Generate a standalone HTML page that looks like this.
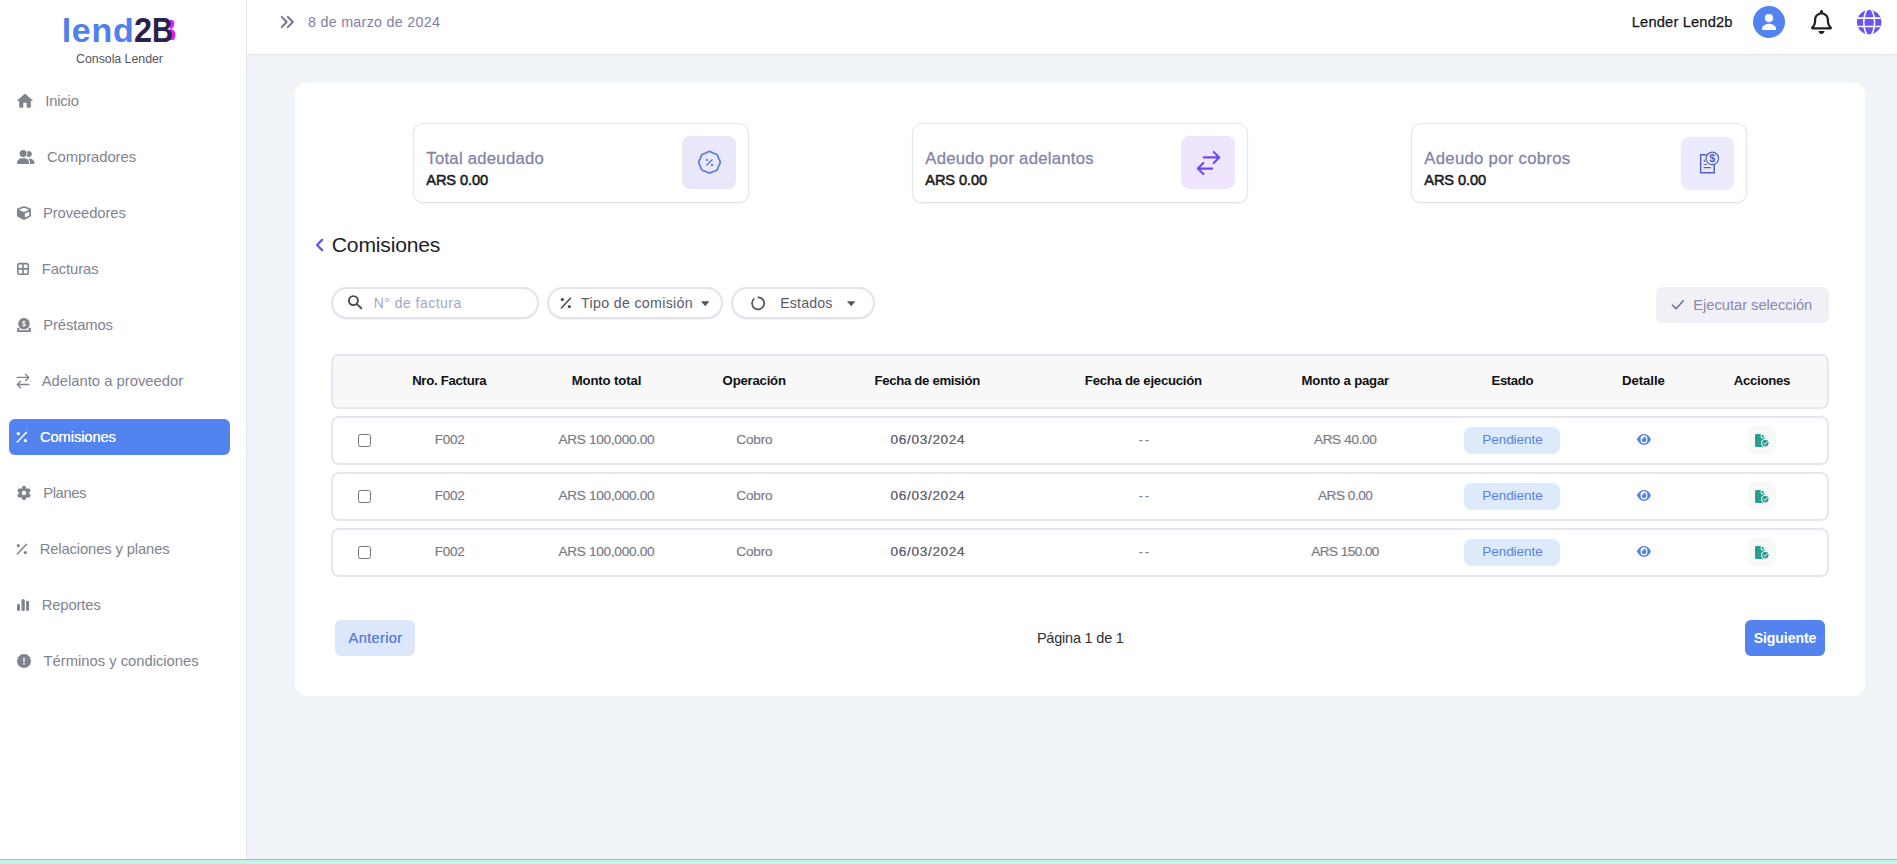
<!DOCTYPE html>
<html lang="es">
<head>
<meta charset="utf-8">
<title>lend2B - Consola Lender - Comisiones</title>
<style>
*{box-sizing:border-box;margin:0;padding:0}
html,body{width:1897px;height:864px;overflow:hidden}
body{position:relative;background:#f0f3f8;font-family:"Liberation Sans",sans-serif;color:#222;-webkit-font-smoothing:antialiased}
.t{position:absolute;white-space:nowrap;line-height:20px;display:block;font-weight:400;text-decoration:none}
.i{position:absolute;display:block;overflow:visible}
.abs{position:absolute;display:block}
#sidebar{position:absolute;left:0;top:0;width:247px;height:859px;background:#fff;border-right:1px solid #e6e7ee}
#topbar{position:absolute;left:247px;top:0;width:1650px;height:55px;background:#fff;border-bottom:1px solid #e4e6ed}
#card{position:absolute;left:295px;top:83px;width:1570px;height:613px;background:#fff;border-radius:12px}
#strip{position:absolute;left:0;top:859px;width:1897px;height:5px;background:#c5f2e8;border-top:1px solid #9fbfb8}
.nav-active{position:absolute;left:9px;top:419px;width:221px;height:36px;border-radius:6px;background:#5383ee}
.stat{position:absolute;top:123px;width:336px;height:80px;border:1px solid #e3e5ec;border-radius:10px;background:#fff;box-shadow:0 1px 2px rgba(40,50,90,.08)}
.stat .ib{position:absolute;left:268px;top:12px;width:54px;height:53px;border-radius:8px}
.pill{position:absolute;top:287px;height:32px;border:2px solid #e1e3ea;border-radius:16px;background:#fff;box-shadow:0 1px 1px rgba(40,50,90,.06)}
.btn{position:absolute;height:36px;border-radius:6px}
.th,.tr{position:absolute;left:331px;width:1498px;border:2px solid #e5e7ee;border-radius:8px}
.th{top:354px;height:55px;background:#f8f8f8}
.tr{height:49px;background:#fff}
.badge{position:absolute;left:1464px;width:96px;height:27px;border-radius:7px;background:#ddeafc}
.cb{position:absolute;left:358px;width:13px;height:13px;margin:0;padding:0}
.act{position:absolute;left:1748px;width:28px;height:28px;border-radius:7px;background:#f6f9f8}
</style>
</head>
<body>

<aside id="sidebar">
<span class="t" style="top:19.97px;left:155.2px;font-size:35px;font-weight:700;color:#e21cf2;transform:scaleX(.86);transform-origin:0 0;clip-path:inset(0 0 0 17.5px)">B</span>
<span class="t" style="top:20.32px;left:61.7px;font-size:34px;font-weight:700;letter-spacing:0.7px;color:#5080ee">lend</span>
<span class="t" style="top:19.97px;left:134.2px;font-size:35px;font-weight:700;color:#28224a;transform:scaleX(.93);transform-origin:0 0">2</span>
<span class="t" style="top:19.97px;left:152.3px;font-size:35px;font-weight:700;color:#28224a;transform:scaleX(.83);transform-origin:0 0">B</span>
<span class="t" style="top:48.50px;font-size:12.4px;color:#54545e;letter-spacing:-0.042px;left:-30.52px;width:300px;text-align:center;">Consola Lender</span>
<nav>
<span class="nav-active"></span>
<a class="t" style="top:90.87px;font-size:14.8px;color:#7f838f;letter-spacing:-0.190px;left:45.30px;">Inicio</a>
<a class="t" style="top:146.87px;font-size:14.8px;color:#7f838f;letter-spacing:-0.046px;left:46.90px;">Compradores</a>
<a class="t" style="top:202.87px;font-size:14.8px;color:#7f838f;letter-spacing:-0.112px;left:43.00px;">Proveedores</a>
<a class="t" style="top:258.87px;font-size:14.8px;color:#7f838f;letter-spacing:-0.096px;left:41.70px;">Facturas</a>
<a class="t" style="top:314.87px;font-size:14.8px;color:#7f838f;letter-spacing:-0.129px;left:43.30px;">Préstamos</a>
<a class="t" style="top:370.87px;font-size:14.8px;color:#7f838f;left:41.70px;">Adelanto a proveedor</a>
<a class="t" style="top:426.87px;font-size:14.8px;color:#ffffff;letter-spacing:-0.135px;left:39.90px;text-shadow:0 0 .4px #fff;">Comisiones</a>
<a class="t" style="top:482.87px;font-size:14.8px;color:#7f838f;letter-spacing:-0.431px;left:43.30px;">Planes</a>
<a class="t" style="top:538.87px;font-size:14.8px;color:#7f838f;letter-spacing:-0.136px;left:39.70px;">Relaciones y planes</a>
<a class="t" style="top:594.87px;font-size:14.8px;color:#7f838f;letter-spacing:-0.136px;left:41.70px;">Reportes</a>
<a class="t" style="top:650.87px;font-size:14.8px;color:#7f838f;letter-spacing:-0.022px;left:43.60px;">Términos y condiciones</a>
<svg class="i" style="left:14.60px;top:91.00px" width="20.00" height="20.00" viewBox="0 0 24 24" ><path fill="#7f838c" d="M10 19v-5h4v5c0 .55.45 1 1 1h3c.55 0 1-.45 1-1v-7h1.7c.46 0 .68-.57.33-.87L12.67 3.6c-.38-.34-.96-.34-1.34 0l-8.36 7.53c-.34.3-.13.87.33.87H5v7c0 .55.45 1 1 1h3c.55 0 1-.45 1-1z"/></svg>
<svg class="i" style="left:17.10px;top:150.00px" width="17.50" height="14.00" viewBox="0 0 640 512" ><path fill="#7f838c" d="M96 128a128 128 0 1 1 256 0A128 128 0 1 1 96 128zM0 482.300C0 383.800 79.800 304 178.300 304h91.400C368.200 304 448 383.800 448 482.300c0 16.400-13.300 29.700-29.700 29.700H29.700C13.300 512 0 498.700 0 482.300zM609.300 512H471.400c5.400-9.400 8.600-20.300 8.600-32v-8c0-60.700-27.100-115.200-69.800-151.800c2.400-.1 4.700-.2 7.100-.2h61.400C567.800 320 640 392.200 640 481.300c0 17-13.800 30.700-30.700 30.700zM432 256c-31 0-59-12.600-79.300-32.900C372.400 196.500 384 163.600 384 128c0-26.800-6.600-52.100-18.300-74.300C384.300 40.100 407.200 32 432 32c61.900 0 112 50.100 112 112s-50.100 112-112 112z"/></svg>
<svg class="i" style="left:17.00px;top:205.90px" width="14.00" height="14.00" viewBox="0 0 512 512" ><path fill="#7f838c" d="M239.1 6.3l-208 78c-18.7 7-31.1 25-31.1 45v225.1c0 18.2 10.3 34.8 26.5 42.9l208 104c13.5 6.8 29.4 6.8 42.9 0l208-104c16.3-8.1 26.5-24.8 26.5-42.9V129.3c0-20-12.4-37.900-31.100-44.900l-208-78C262 2.200 250 2.200 239.100 6.300zM256 68.400l192 72v1.100l-192 78-192-78v-1.100l192-72zm32 356V275.500l160-65v133.900l-160 80z"/></svg>
<svg class="i" style="left:16.00px;top:262.00px" width="14.00" height="14.00" viewBox="0 0 14 14" ><g fill="none" stroke="#7f838c" stroke-width="1.6"><rect x="1.8" y="1.6" width="10.5" height="10.6" rx="2"/><path d="M7.05 1.600v10.600M1.800 6.900h10.500"/></g></svg>
<svg class="i" style="left:17.10px;top:318.30px" width="14.00" height="14.00" viewBox="0 0 512 512" ><path fill="#7f838c" d="M326.700 403.700c-22.100 8-45.900 12.300-70.700 12.300s-48.700-4.400-70.700-12.300c-.3-.1-.5-.2-.8-.3c-30-11-56.800-28.700-78.600-51.400C70 314.600 48 263.900 48 208C48 93.100 141.100 0 256 0S464 93.100 464 208c0 55.900-22 106.600-57.900 144c-1 1-2 2.100-3 3.100c-21.400 21.400-47.400 38.100-76.300 48.600zM256 91.900c-11.100 0-20.100 9-20.100 20.100v6c-5.600 1.200-10.900 2.900-15.900 5.100c-15 6.800-27.900 19.400-31.100 37.700c-1.800 10.200-.8 20 3.400 29c4.200 8.800 10.700 15 17.300 19.500c11.600 7.900 26.900 12.500 38.600 16l2.200 .7c13.900 4.200 23.400 7.400 29.300 11.700c2.500 1.800 3.400 3.200 3.700 4c.3 .8 .9 2.600 .2 6.700c-.6 3.500-2.500 6.400-8 8.800c-6.100 2.600-16 3.900-28.800 1.900c-6-1-16.700-4.600-26.200-7.900l0 0 0 0 0 0c-2.200-.7-4.300-1.500-6.400-2.100c-10.500-3.500-21.800 2.200-25.300 12.700s2.200 21.800 12.700 25.300c1.200 .4 2.700 .9 4.400 1.500c7.900 2.700 20.300 6.900 29.800 9.100V304c0 11.100 9 20.100 20.100 20.100s20.100-9 20.100-20.100v-5.500c5.300-1 10.500-2.500 15.400-4.600c15.700-6.700 28.400-19.700 31.600-38.700c1.800-10.400 1-20.300-3-29.400c-3.900-9-10.200-15.600-16.900-20.500c-12.200-8.800-28.300-13.700-40.400-17.400l-.8-.2c-14.200-4.300-23.800-7.300-29.900-11.400c-2.600-1.800-3.400-3-3.600-3.500c-.2-.3-.7-1.600-.1-5c.3-1.900 1.900-5.200 8.200-8.100c6.400-2.900 16.400-4.500 28.600-2.600c4.300 .7 17.900 3.300 21.700 4.300c10.700 2.800 21.600-3.500 24.500-14.200s-3.500-21.600-14.200-24.500c-4.400-1.200-14.400-3.200-21-4.400V112c0-11.100-9-20.100-20.100-20.100zM48 352H64c19.500 25.900 44 47.700 72.200 64H64v32H256 448V416H375.800c28.200-16.300 52.800-38.100 72.200-64h16c26.500 0 48 21.500 48 48v64c0 26.500-21.500 48-48 48H48c-26.500 0-48-21.500-48-48V400c0-26.500 21.500-48 48-48z"/></svg>
<svg class="i" style="left:16.00px;top:373.00px" width="14.00" height="16.00" viewBox="0 0 14 16" ><g fill="none" stroke="#7f838c" stroke-width="1.350" stroke-linecap="round" stroke-linejoin="round"><path d="M1.300 4.400h11.500M9.500 1.200l3.300 3.200l-3.300 3.200"/><path d="M12.800 11.500h-11.500M4.600 8.300l-3.300 3.200l3.300 3.200"/></g></svg>
<svg class="i" style="left:16.30px;top:431.20px" width="12.00" height="12.00" viewBox="0 0 12 12" ><path d="M1.300 10.900L10.500 1.300" stroke="#ffffff" stroke-width="1.500" stroke-linecap="round" fill="none"/><circle cx="2.300" cy="2.600" r="1.600" fill="#ffffff"/><circle cx="9.400" cy="9.600" r="1.600" fill="#ffffff"/></svg>
<svg class="i" style="left:17.00px;top:486.10px" width="14.00" height="14.00" viewBox="0 0 512 512" ><path fill="#7f838c" d="M495.900 166.600c3.200 8.700 .5 18.400-6.400 24.600l-43.300 39.400c1.100 8.300 1.700 16.800 1.700 25.400s-.6 17.100-1.700 25.400l43.300 39.400c6.900 6.200 9.600 15.900 6.400 24.600c-4.400 11.900-9.700 23.300-15.800 34.300l-4.700 8.100c-6.600 11-14 21.400-22.100 31.200c-5.900 7.200-15.700 9.600-24.500 6.800l-55.700-17.700c-13.400 10.300-28.200 18.900-44 25.400l-12.500 57.100c-2 9.100-9 16.300-18.200 17.800c-13.800 2.300-28 3.500-42.500 3.500s-28.700-1.200-42.500-3.500c-9.200-1.500-16.200-8.700-18.200-17.800l-12.500-57.100c-15.800-6.500-30.600-15.100-44-25.400L83.100 425.900c-8.800 2.800-18.600 .3-24.500-6.800c-8.100-9.800-15.500-20.200-22.100-31.200l-4.700-8.100c-6.100-11-11.400-22.400-15.800-34.300c-3.200-8.700-.5-18.400 6.400-24.600l43.300-39.400C64.600 273.100 64 264.600 64 256s.6-17.100 1.700-25.400L22.400 191.200c-6.900-6.200-9.600-15.900-6.400-24.600c4.400-11.900 9.700-23.300 15.800-34.300l4.700-8.100c6.600-11 14-21.400 22.100-31.200c5.900-7.200 15.700-9.600 24.500-6.800l55.700 17.700c13.400-10.300 28.200-18.900 44-25.400l12.500-57.100c2-9.100 9-16.300 18.200-17.800C227.300 1.200 241.500 0 256 0s28.700 1.200 42.500 3.500c9.200 1.500 16.200 8.700 18.200 17.800l12.500 57.100c15.800 6.500 30.600 15.100 44 25.400l55.700-17.700c8.800-2.800 18.600-.3 24.500 6.800c8.100 9.800 15.500 20.200 22.100 31.200l4.700 8.100c6.100 11 11.400 22.400 15.800 34.300zM256 336a80 80 0 1 0 0-160 80 80 0 1 0 0 160z"/></svg>
<svg class="i" style="left:16.30px;top:543.20px" width="12.00" height="12.00" viewBox="0 0 12 12" ><path d="M1.300 10.900L10.500 1.300" stroke="#7f838c" stroke-width="1.500" stroke-linecap="round" fill="none"/><circle cx="2.300" cy="2.600" r="1.600" fill="#7f838c"/><circle cx="9.400" cy="9.600" r="1.600" fill="#7f838c"/></svg>
<svg class="i" style="left:16.00px;top:598.00px" width="14.00" height="14.00" viewBox="0 0 14 14" ><g fill="#7f838c"><rect x="1" y="6.100" width="3" height="6.900" rx="1.400"/><rect x="5.500" y="1" width="3.300" height="12" rx="1.500"/><rect x="10.100" y="2.800" width="3" height="10.200" rx="1.400"/></g></svg>
<svg class="i" style="left:17.00px;top:654.00px" width="14.00" height="14.00" viewBox="0 0 512 512" ><path fill="#7f838c" d="M256 512A256 256 0 1 0 256 0a256 256 0 1 0 0 512zm0-384c13.300 0 24 10.700 24 24V264c0 13.300-10.700 24-24 24s-24-10.700-24-24V152c0-13.300 10.700-24 24-24zM224 352a32 32 0 1 1 64 0 32 32 0 1 1 -64 0z"/></svg>
</nav>
</aside>
<header id="topbar">
</header>
<svg class="i" style="left:280.00px;top:15.00px" width="15.00" height="14.00" viewBox="0 0 15 14" ><g fill="none" stroke="#726f9a" stroke-width="1.900" stroke-linecap="round" stroke-linejoin="round"><path d="M1.700 1.800l5 5.200l-5 5.200"/><path d="M7.800 1.800l5 5.200l-5 5.200"/></g></svg>
<span class="t" style="top:12.05px;font-size:14.3px;color:#7f7ea6;letter-spacing:0.277px;left:308.00px;">8 de marzo de 2024</span>
<span class="t" style="top:12.41px;font-size:14.7px;color:#16161c;letter-spacing:0.158px;left:1631.80px;-webkit-text-stroke:.25px #16161c;">Lender Lend2b</span>
<svg class="i" style="left:1753.00px;top:6.00px" width="32.00" height="32.00" viewBox="0 0 32 32" ><circle cx="16" cy="16" r="16" fill="#5383ee"/><circle cx="16" cy="12.100" r="4.100" fill="#fff"/><path d="M9 24v-1.200c0-3.200 4.300-5 7-5s7 1.800 7 5v1.200z" fill="#fff"/></svg>
<svg class="i" style="left:1810.50px;top:9.90px" width="21.00" height="24.00" viewBox="0 0 448 512" ><path fill="#222" d="M439.390 362.290c-19.320-20.760-55.470-51.990-55.470-154.290 0-77.700-54.480-139.900-127.940-155.160V32c0-17.670-14.320-32-31.980-32s-31.980 14.330-31.980 32v20.840C118.560 68.100 64.080 130.300 64.080 208c0 102.300-36.150 133.530-55.470 154.290-6 6.450-8.660 14.160-8.610 21.710.110 16.400 12.980 32 32.100 32h383.800c19.120 0 32-15.600 32.100-32 .050-7.550-2.610-15.270-8.610-21.710zM67.530 368c21.220-27.970 44.420-74.330 44.530-159.420 0-.200-.060-.380-.060-.580 0-61.860 50.140-112 112-112s112 50.140 112 112c0 .2-.060.380-.060.580.110 85.100 23.310 131.460 44.530 159.420H67.530zM224 512c35.320 0 63.970-28.650 63.970-64H160.030c0 35.350 28.650 64 63.970 64z"/></svg>
<svg class="i" style="left:1856.80px;top:9.80px" width="24.40" height="24.40" viewBox="0 0 24.400 24.400" ><defs><clipPath id="gc"><circle cx="12.200" cy="12.200" r="12.200"/></clipPath></defs><circle cx="12.200" cy="12.200" r="12.200" fill="#6a52ea"/><g clip-path="url(#gc)" fill="none" stroke="#fff" stroke-width="1.550"><path d="M0 8.150h24.400M0 16.450h24.400"/><ellipse cx="12.200" cy="12.200" rx="5.400" ry="13.400"/></g></svg>
<main id="card"></main>
<section class="stat" style="left:413px"><span class="ib" style="background:#e8e8fa"></span></section>
<span class="t" style="top:148.71px;font-size:16.7px;color:#8584a8;letter-spacing:0.260px;left:426.30px;-webkit-text-stroke:.3px #8584a8;">Total adeudado</span>
<span class="t" style="top:170.14px;font-size:14.6px;color:#1c1c22;letter-spacing:-0.099px;left:426.30px;-webkit-text-stroke:.55px #1c1c22;">ARS 0.00</span>
<section class="stat" style="left:912px"><span class="ib" style="background:#efe6fd"></span></section>
<span class="t" style="top:148.71px;font-size:16.7px;color:#8584a8;letter-spacing:0.262px;left:925.30px;-webkit-text-stroke:.3px #8584a8;">Adeudo por adelantos</span>
<span class="t" style="top:170.14px;font-size:14.6px;color:#1c1c22;letter-spacing:-0.099px;left:925.30px;-webkit-text-stroke:.55px #1c1c22;">ARS 0.00</span>
<section class="stat" style="left:1411px"><span class="ib" style="left:269px;top:13px;width:53px;height:53px;background:#ebebfd"></span></section>
<span class="t" style="top:148.71px;font-size:16.7px;color:#8584a8;letter-spacing:0.299px;left:1424.30px;-webkit-text-stroke:.3px #8584a8;">Adeudo por cobros</span>
<span class="t" style="top:170.14px;font-size:14.6px;color:#1c1c22;letter-spacing:-0.099px;left:1424.30px;-webkit-text-stroke:.55px #1c1c22;">ARS 0.00</span>
<svg class="i" style="left:697.00px;top:150.00px" width="25.00" height="25.00" viewBox="0 0 25 25" ><path d="M12.50 1.63 L13.19 1.70 L13.87 1.90 L14.51 2.20 L15.12 2.53 L15.71 2.85 L16.30 3.13 L16.91 3.35 L17.56 3.54 L18.22 3.74 L18.88 3.98 L19.50 4.31 L20.05 4.75 L20.49 5.30 L20.82 5.92 L21.06 6.58 L21.26 7.24 L21.45 7.89 L21.67 8.50 L21.95 9.09 L22.27 9.68 L22.60 10.29 L22.90 10.93 L23.10 11.61 L23.17 12.30 L23.10 12.99 L22.90 13.67 L22.60 14.31 L22.27 14.92 L21.95 15.51 L21.67 16.10 L21.45 16.71 L21.26 17.36 L21.06 18.02 L20.82 18.68 L20.49 19.30 L20.05 19.85 L19.50 20.29 L18.88 20.62 L18.22 20.86 L17.56 21.06 L16.91 21.25 L16.30 21.47 L15.71 21.75 L15.12 22.07 L14.51 22.40 L13.87 22.70 L13.19 22.90 L12.50 22.97 L11.81 22.90 L11.13 22.70 L10.49 22.40 L9.88 22.07 L9.29 21.75 L8.70 21.47 L8.09 21.25 L7.44 21.06 L6.78 20.86 L6.12 20.62 L5.50 20.29 L4.95 19.85 L4.51 19.30 L4.18 18.68 L3.94 18.02 L3.74 17.36 L3.55 16.71 L3.33 16.10 L3.05 15.51 L2.73 14.92 L2.40 14.31 L2.10 13.67 L1.90 12.99 L1.83 12.30 L1.90 11.61 L2.10 10.93 L2.40 10.29 L2.73 9.68 L3.05 9.09 L3.33 8.50 L3.55 7.89 L3.74 7.24 L3.94 6.58 L4.18 5.92 L4.51 5.30 L4.95 4.75 L5.50 4.31 L6.12 3.98 L6.78 3.74 L7.44 3.54 L8.09 3.35 L8.70 3.13 L9.29 2.85 L9.88 2.53 L10.49 2.20 L11.13 1.90 L11.81 1.70Z" fill="none" stroke="#5b7fd8" stroke-width="1.750" stroke-linejoin="round"/><path d="M9.900 15.100l5.200-5.400" stroke="#5b7fd8" stroke-width="1.500" stroke-linecap="round"/><circle cx="10" cy="10" r="1.150" fill="#5b7fd8"/><circle cx="15" cy="15" r="1.150" fill="#5b7fd8"/></svg>
<svg class="i" style="left:1196.00px;top:150.00px" width="25.00" height="26.00" viewBox="0 0 25 26" ><g fill="none" stroke="#6a4df0" stroke-width="2.100" stroke-linecap="round" stroke-linejoin="round"><path d="M7.800 7.400H23.300M17.700 1.900L23.300 7.400L17.700 12.900"/><path d="M16.200 18.600H1.800M7.400 13.100L1.800 18.600L7.400 24.100"/></g></svg>
<svg class="i" style="left:1696.00px;top:150.00px" width="24.00" height="26.00" viewBox="0 0 24 26" ><g fill="none" stroke="#4d63c0" stroke-width="1.500"><path d="M10.500 4.850H4.650V22.850H18.250V14.500"/><path d="M7.600 14.500h3.400M7.600 17.700h7.300" stroke-width="1.200"/><path d="M8.300 9.800v2.200" stroke-width="1.200"/><circle cx="16.300" cy="8.400" r="6.250" fill="#ebebfd" stroke-width="1.250"/></g><text x="16.300" y="12.300" text-anchor="middle" font-family="Liberation Sans, sans-serif" font-size="10.800" font-weight="700" fill="#4d63c0">$</text></svg>
<svg class="i" style="left:314.00px;top:237.00px" width="12.00" height="16.00" viewBox="0 0 12 16" ><path d="M8.100 2.900l-5 5.100l5 5.100" fill="none" stroke="#6a4df0" stroke-width="2.300" stroke-linecap="round" stroke-linejoin="round"/></svg>
<h1 class="t" style="top:234.79px;font-size:21.1px;color:#222226;letter-spacing:-0.181px;left:331.80px;">Comisiones</h1>
<label class="pill" style="left:331px;width:208px"></label>
<svg class="i" style="left:347.00px;top:294.00px" width="16.00" height="16.00" viewBox="0 0 16 16" ><g fill="none" stroke="#4a4a4a" stroke-width="1.900" stroke-linecap="round"><circle cx="6.400" cy="6.600" r="4.500"/><path d="M9.900 10.100l4.400 4.200"/></g></svg>
<span class="t" style="top:293.48px;font-size:13.9px;color:#a3a6c4;letter-spacing:0.527px;left:373.70px;">N° de factura</span>
<span class="pill" style="left:547px;width:176px"></span>
<svg class="i" style="left:560.20px;top:297.40px" width="12.00" height="12.00" viewBox="0 0 12 12" ><path d="M1.300 10.900L10.500 1.300" stroke="#4a4a4a" stroke-width="1.500" stroke-linecap="round" fill="none"/><circle cx="2.300" cy="2.600" r="1.600" fill="#4a4a4a"/><circle cx="9.400" cy="9.600" r="1.600" fill="#4a4a4a"/></svg>
<span class="t" style="top:293.28px;font-size:14.2px;color:#5b5b66;letter-spacing:0.332px;left:581.00px;">Tipo de comisión</span>
<svg class="i" style="left:700.70px;top:301.10px" width="8.40" height="5.00" viewBox="0 0 8.400 5" ><path d="M.5 .2h7.400a.3.3 0 0 1 .2.500l-3.500 4a.55.55 0 0 1-.8 0l-3.500-4a.3.3 0 0 1 .2-.500z" fill="#555"/></svg>
<span class="pill" style="left:731px;width:144px"></span>
<svg class="i" style="left:750.00px;top:295.90px" width="16.00" height="16.00" viewBox="0 0 16 16" ><path d="M6.300 1.600a6.050 6.050 0 1 0 3.600 0" fill="none" stroke="#555" stroke-width="1.750" stroke-linecap="butt" transform="rotate(-22 8 7.400)"/></svg>
<span class="t" style="top:293.28px;font-size:14.2px;color:#5b5b66;letter-spacing:0.149px;left:780.20px;">Estados</span>
<svg class="i" style="left:846.60px;top:301.10px" width="8.40" height="5.00" viewBox="0 0 8.400 5" ><path d="M.5 .2h7.400a.3.3 0 0 1 .2.500l-3.500 4a.55.55 0 0 1-.8 0l-3.500-4a.3.3 0 0 1 .2-.500z" fill="#555"/></svg>
<span class="btn" style="left:1656px;top:287px;width:173px;background:#f0f0f6"></span>
<svg class="i" style="left:1671.00px;top:299.00px" width="14.00" height="12.00" viewBox="0 0 14 12" ><path d="M1.500 6.300l3.600 3.500l7.200-8" fill="none" stroke="#6f6c96" stroke-width="1.600" stroke-linecap="round" stroke-linejoin="round"/></svg>
<span class="t" style="top:295.01px;font-size:14.7px;color:#8a88b0;letter-spacing:-0.006px;left:1693.20px;">Ejecutar selección</span>
<div class="th"></div>
<span class="t" style="top:370.93px;font-size:13.2px;color:#101014;font-weight:700;letter-spacing:-0.286px;left:299.26px;width:300px;text-align:center;">Nro. Factura</span>
<span class="t" style="top:370.93px;font-size:13.2px;color:#101014;font-weight:700;letter-spacing:-0.141px;left:456.43px;width:300px;text-align:center;">Monto total</span>
<span class="t" style="top:370.93px;font-size:13.2px;color:#101014;font-weight:700;letter-spacing:-0.236px;left:604.18px;width:300px;text-align:center;">Operación</span>
<span class="t" style="top:370.93px;font-size:13.2px;color:#101014;font-weight:700;letter-spacing:-0.331px;left:777.23px;width:300px;text-align:center;">Fecha de emisión</span>
<span class="t" style="top:370.93px;font-size:13.2px;color:#101014;font-weight:700;letter-spacing:-0.258px;left:993.37px;width:300px;text-align:center;">Fecha de ejecución</span>
<span class="t" style="top:370.93px;font-size:13.2px;color:#101014;font-weight:700;letter-spacing:-0.209px;left:1195.30px;width:300px;text-align:center;">Monto a pagar</span>
<span class="t" style="top:370.93px;font-size:13.2px;color:#101014;font-weight:700;letter-spacing:-0.402px;left:1362.30px;width:300px;text-align:center;">Estado</span>
<span class="t" style="top:370.93px;font-size:13.2px;color:#101014;font-weight:700;letter-spacing:-0.081px;left:1493.46px;width:300px;text-align:center;">Detalle</span>
<span class="t" style="top:370.93px;font-size:13.2px;color:#101014;font-weight:700;letter-spacing:-0.299px;left:1611.95px;width:300px;text-align:center;">Acciones</span>
<div class="tr" style="top:416px"></div>
<input type="checkbox" class="cb" style="top:434px">
<span class="t" style="top:429.89px;font-size:13.6px;color:#7b7b87;letter-spacing:-0.300px;left:299.55px;width:300px;text-align:center;-webkit-text-stroke:.18px #7b7b87;">F002</span>
<span class="t" style="top:429.89px;font-size:13.6px;color:#7b7b87;letter-spacing:-0.285px;left:456.36px;width:300px;text-align:center;-webkit-text-stroke:.18px #7b7b87;">ARS 100,000.00</span>
<span class="t" style="top:429.89px;font-size:13.6px;color:#7b7b87;letter-spacing:-0.160px;left:604.42px;width:300px;text-align:center;-webkit-text-stroke:.18px #7b7b87;">Cobro</span>
<span class="t" style="top:429.89px;font-size:13.6px;color:#6a6a74;letter-spacing:0.670px;left:777.94px;width:300px;text-align:center;text-shadow:0 0 .5px #6a6a74;">06/03/2024</span>
<span class="t" style="top:429.89px;font-size:13.6px;color:#7b7b87;letter-spacing:1.742px;left:994.77px;width:300px;text-align:center;">--</span>
<span class="t" style="top:429.89px;font-size:13.6px;color:#7b7b87;letter-spacing:-0.359px;left:1195.22px;width:300px;text-align:center;-webkit-text-stroke:.18px #7b7b87;">ARS 40.00</span>
<span class="badge" style="top:427px"></span>
<span class="t" style="top:429.89px;font-size:13.6px;color:#5782e8;letter-spacing:-0.094px;left:1362.45px;width:300px;text-align:center;">Pendiente</span>
<svg class="i" style="left:1636.90px;top:433.60px" width="13.90" height="10.90" viewBox="0 64 576 384" preserveAspectRatio="none"><path fill="#5480ee" d="M572.520 241.400C518.290 135.590 410.930 64 288 64S57.680 135.640 3.480 241.410a32.350 32.350 0 0 0 0 29.190C57.710 376.410 165.070 448 288 448s230.320-71.640 284.520-177.410a32.350 32.350 0 0 0 0-29.190zM288 400a144 144 0 1 1 144-144 143.930 143.930 0 0 1-144 144zm0-240a95.310 95.310 0 0 0-25.310 3.790 47.850 47.850 0 0 1-66.900 66.900A95.780 95.780 0 1 0 288 160z"/></svg>
<span class="act" style="top:426.2px"></span>
<svg class="i" style="left:1755.00px;top:434.00px" width="14.20" height="13.00" viewBox="0 0 14.200 13" ><path d="M0 1.400a1.400 1.400 0 0 1 1.400-1.400h4.300v3.300a.9.900 0 0 0 .9.900h3.300v1.300a4.400 4.400 0 0 0-3 7.500h-5.500a1.400 1.400 0 0 1-1.400-1.400z" fill="#2a9d8f"/><path d="M4 5h6v8h-6z" fill="#2a9d8f"/><path d="M6.600 0l3.300 3.300h-3.300z" fill="#2a9d8f"/><circle cx="10.300" cy="9.100" r="3.900" fill="#2a9d8f" stroke="#fff" stroke-width="1"/><path d="M8.500 9.200l1.300 1.300l2.300-2.600" fill="none" stroke="#fff" stroke-width="1" stroke-linecap="round" stroke-linejoin="round"/></svg>
<div class="tr" style="top:472px"></div>
<input type="checkbox" class="cb" style="top:490px">
<span class="t" style="top:485.89px;font-size:13.6px;color:#7b7b87;letter-spacing:-0.300px;left:299.55px;width:300px;text-align:center;-webkit-text-stroke:.18px #7b7b87;">F002</span>
<span class="t" style="top:485.89px;font-size:13.6px;color:#7b7b87;letter-spacing:-0.285px;left:456.36px;width:300px;text-align:center;-webkit-text-stroke:.18px #7b7b87;">ARS 100,000.00</span>
<span class="t" style="top:485.89px;font-size:13.6px;color:#7b7b87;letter-spacing:-0.160px;left:604.42px;width:300px;text-align:center;-webkit-text-stroke:.18px #7b7b87;">Cobro</span>
<span class="t" style="top:485.89px;font-size:13.6px;color:#6a6a74;letter-spacing:0.670px;left:777.94px;width:300px;text-align:center;text-shadow:0 0 .5px #6a6a74;">06/03/2024</span>
<span class="t" style="top:485.89px;font-size:13.6px;color:#7b7b87;letter-spacing:1.742px;left:994.77px;width:300px;text-align:center;">--</span>
<span class="t" style="top:485.89px;font-size:13.6px;color:#7b7b87;letter-spacing:-0.473px;left:1195.16px;width:300px;text-align:center;-webkit-text-stroke:.18px #7b7b87;">ARS 0.00</span>
<span class="badge" style="top:483px"></span>
<span class="t" style="top:485.89px;font-size:13.6px;color:#5782e8;letter-spacing:-0.094px;left:1362.45px;width:300px;text-align:center;">Pendiente</span>
<svg class="i" style="left:1636.90px;top:489.60px" width="13.90" height="10.90" viewBox="0 64 576 384" preserveAspectRatio="none"><path fill="#5480ee" d="M572.520 241.400C518.290 135.590 410.930 64 288 64S57.680 135.640 3.480 241.410a32.350 32.350 0 0 0 0 29.190C57.710 376.410 165.070 448 288 448s230.320-71.640 284.520-177.410a32.350 32.350 0 0 0 0-29.190zM288 400a144 144 0 1 1 144-144 143.930 143.930 0 0 1-144 144zm0-240a95.310 95.310 0 0 0-25.310 3.790 47.850 47.850 0 0 1-66.900 66.900A95.780 95.780 0 1 0 288 160z"/></svg>
<span class="act" style="top:482.2px"></span>
<svg class="i" style="left:1755.00px;top:490.00px" width="14.20" height="13.00" viewBox="0 0 14.200 13" ><path d="M0 1.400a1.400 1.400 0 0 1 1.400-1.400h4.300v3.300a.9.900 0 0 0 .9.900h3.300v1.300a4.400 4.400 0 0 0-3 7.500h-5.500a1.400 1.400 0 0 1-1.400-1.400z" fill="#2a9d8f"/><path d="M4 5h6v8h-6z" fill="#2a9d8f"/><path d="M6.600 0l3.300 3.300h-3.300z" fill="#2a9d8f"/><circle cx="10.300" cy="9.100" r="3.900" fill="#2a9d8f" stroke="#fff" stroke-width="1"/><path d="M8.500 9.200l1.300 1.300l2.300-2.600" fill="none" stroke="#fff" stroke-width="1" stroke-linecap="round" stroke-linejoin="round"/></svg>
<div class="tr" style="top:528px"></div>
<input type="checkbox" class="cb" style="top:546px">
<span class="t" style="top:541.89px;font-size:13.6px;color:#7b7b87;letter-spacing:-0.300px;left:299.55px;width:300px;text-align:center;-webkit-text-stroke:.18px #7b7b87;">F002</span>
<span class="t" style="top:541.89px;font-size:13.6px;color:#7b7b87;letter-spacing:-0.285px;left:456.36px;width:300px;text-align:center;-webkit-text-stroke:.18px #7b7b87;">ARS 100,000.00</span>
<span class="t" style="top:541.89px;font-size:13.6px;color:#7b7b87;letter-spacing:-0.160px;left:604.42px;width:300px;text-align:center;-webkit-text-stroke:.18px #7b7b87;">Cobro</span>
<span class="t" style="top:541.89px;font-size:13.6px;color:#6a6a74;letter-spacing:0.670px;left:777.94px;width:300px;text-align:center;text-shadow:0 0 .5px #6a6a74;">06/03/2024</span>
<span class="t" style="top:541.89px;font-size:13.6px;color:#7b7b87;letter-spacing:1.742px;left:994.77px;width:300px;text-align:center;">--</span>
<span class="t" style="top:541.89px;font-size:13.6px;color:#7b7b87;letter-spacing:-0.582px;left:1195.11px;width:300px;text-align:center;-webkit-text-stroke:.18px #7b7b87;">ARS 150.00</span>
<span class="badge" style="top:539px"></span>
<span class="t" style="top:541.89px;font-size:13.6px;color:#5782e8;letter-spacing:-0.094px;left:1362.45px;width:300px;text-align:center;">Pendiente</span>
<svg class="i" style="left:1636.90px;top:545.60px" width="13.90" height="10.90" viewBox="0 64 576 384" preserveAspectRatio="none"><path fill="#5480ee" d="M572.520 241.400C518.290 135.590 410.930 64 288 64S57.680 135.640 3.480 241.410a32.350 32.350 0 0 0 0 29.190C57.710 376.410 165.070 448 288 448s230.320-71.640 284.520-177.410a32.350 32.350 0 0 0 0-29.190zM288 400a144 144 0 1 1 144-144 143.930 143.930 0 0 1-144 144zm0-240a95.310 95.310 0 0 0-25.310 3.790 47.850 47.850 0 0 1-66.900 66.900A95.780 95.780 0 1 0 288 160z"/></svg>
<span class="act" style="top:538.2px"></span>
<svg class="i" style="left:1755.00px;top:546.00px" width="14.20" height="13.00" viewBox="0 0 14.200 13" ><path d="M0 1.400a1.400 1.400 0 0 1 1.400-1.400h4.300v3.300a.9.900 0 0 0 .9.900h3.300v1.300a4.400 4.400 0 0 0-3 7.500h-5.500a1.400 1.400 0 0 1-1.400-1.400z" fill="#2a9d8f"/><path d="M4 5h6v8h-6z" fill="#2a9d8f"/><path d="M6.600 0l3.300 3.300h-3.300z" fill="#2a9d8f"/><circle cx="10.300" cy="9.100" r="3.900" fill="#2a9d8f" stroke="#fff" stroke-width="1"/><path d="M8.500 9.200l1.300 1.300l2.300-2.600" fill="none" stroke="#fff" stroke-width="1" stroke-linecap="round" stroke-linejoin="round"/></svg>
<span class="btn" style="left:335px;top:620px;width:80px;background:#dde7fb"></span>
<span class="t" style="top:628.31px;font-size:14.7px;color:#5c7fe2;letter-spacing:0.333px;left:348.50px;text-shadow:0 0 .3px #5c7fe2;">Anterior</span>
<span class="t" style="top:628.38px;font-size:14.5px;color:#2e2e33;letter-spacing:-0.208px;left:930.30px;width:300px;text-align:center;">Página 1 de 1</span>
<span class="btn" style="left:1745px;top:620px;width:80px;background:#5383ee"></span>
<span class="t" style="top:628.48px;font-size:14.2px;color:#ffffff;font-weight:700;letter-spacing:-0.138px;left:1753.70px;">Siguiente</span>
<div id="strip"></div>
</body></html>
